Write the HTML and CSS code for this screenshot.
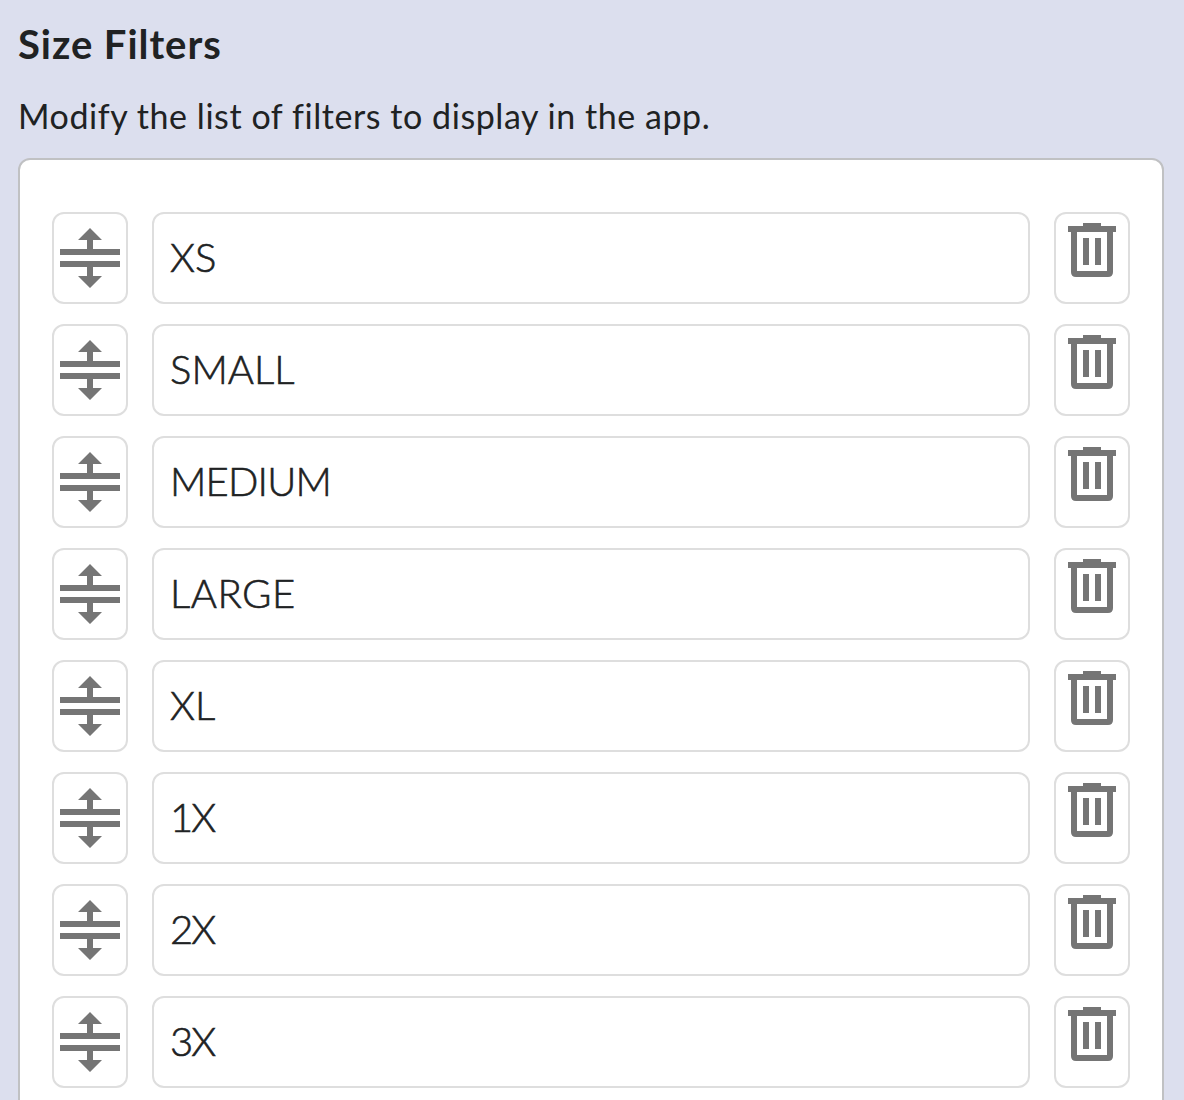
FILE: index.html
```html
<!DOCTYPE html>
<html lang="en">
<head>
  <meta charset="UTF-8">
  <meta name="viewport" content="width=device-width, initial-scale=1.0">
  <title>Size Filters</title>
  <link rel="stylesheet" href="styles.css">
</head>
<body>
  <svg class="sprite">
    <symbol id="drag" viewBox="0 0 60 60">
      <path d="M30 0L42 12H33V21H60V27H0V21H27V12H18ZM0 33H60V39H33V48H42L30 60L18 48H27V39H0Z"/>
    </symbol>
    <symbol id="trash" viewBox="0 0 48 54">
      <path fill-rule="evenodd" d="M15 0H33V3H48V9H45V49Q45 54 40 54H8Q3 54 3 49V9H0V3H15ZM9 9V48H39V9ZM15 15H21V42H15ZM27 15H33V42H27Z"/>
    </symbol>
  </svg>

  <div class="container">
    <h2 class="title">Size Filters</h2>
    <p class="description">Modify the list of filters to display in the app.</p>

    <div class="panel">
      <div class="row">
        <button class="btn drag" aria-label="Move"><svg><use href="#drag"/></svg></button>
        <input class="name" type="text" value="XS">
        <button class="btn trash" aria-label="Delete"><svg><use href="#trash"/></svg></button>
      </div>
      <div class="row">
        <button class="btn drag" aria-label="Move"><svg><use href="#drag"/></svg></button>
        <input class="name" type="text" value="SMALL">
        <button class="btn trash" aria-label="Delete"><svg><use href="#trash"/></svg></button>
      </div>
      <div class="row">
        <button class="btn drag" aria-label="Move"><svg><use href="#drag"/></svg></button>
        <input class="name tight" type="text" value="MEDIUM">
        <button class="btn trash" aria-label="Delete"><svg><use href="#trash"/></svg></button>
      </div>
      <div class="row">
        <button class="btn drag" aria-label="Move"><svg><use href="#drag"/></svg></button>
        <input class="name wide" type="text" value="LARGE">
        <button class="btn trash" aria-label="Delete"><svg><use href="#trash"/></svg></button>
      </div>
      <div class="row">
        <button class="btn drag" aria-label="Move"><svg><use href="#drag"/></svg></button>
        <input class="name" type="text" value="XL">
        <button class="btn trash" aria-label="Delete"><svg><use href="#trash"/></svg></button>
      </div>
      <div class="row">
        <button class="btn drag" aria-label="Move"><svg><use href="#drag"/></svg></button>
        <input class="name number" type="text" value="1X">
        <button class="btn trash" aria-label="Delete"><svg><use href="#trash"/></svg></button>
      </div>
      <div class="row">
        <button class="btn drag" aria-label="Move"><svg><use href="#drag"/></svg></button>
        <input class="name number" type="text" value="2X">
        <button class="btn trash" aria-label="Delete"><svg><use href="#trash"/></svg></button>
      </div>
      <div class="row">
        <button class="btn drag" aria-label="Move"><svg><use href="#drag"/></svg></button>
        <input class="name number" type="text" value="3X">
        <button class="btn trash" aria-label="Delete"><svg><use href="#trash"/></svg></button>
      </div>
    </div>
  </div>
</body>
</html>
```
FILE: styles.css
```css
* { box-sizing: border-box; }
body { margin: 0; height: 100vh; overflow: hidden; background: #dcdfee; color: #202223; font-family: Avenir, Lato, sans-serif; }
.sprite { display: none; }
.container { padding: 20px 20px 0 18px; }
.title { margin: 0; font-size: 40px; line-height: 48px; font-weight: bold; letter-spacing: 0.95px; }
.description { margin: 24px 0 18px; font-size: 34px; line-height: 48px; letter-spacing: 0.56px; }
.panel { display: flex; flex-direction: column; gap: 20px; padding: 52px 32px; background: #fff; border: 2px solid #c0c1c3; border-radius: 12px; }
.row { display: flex; gap: 24px; height: 92px; }
.btn, .name { border: 2px solid #dedede; border-radius: 12px; background: #fff; }
.btn { display: flex; flex: none; justify-content: center; width: 76px; padding: 0; cursor: pointer; }
.btn svg { fill: #757575; }
.drag { align-items: center; }
.drag svg { width: 60px; height: 60px; }
.trash { align-items: flex-start; padding-top: 9px; }
.trash svg { width: 48px; height: 54px; }
.name { flex: 1; min-width: 0; padding: 0 16px 2px; color: #202223; font-family: inherit; font-size: 40px; font-weight: 300; -webkit-text-stroke: 0.6px #202223; }
.tight { letter-spacing: -0.8px; }
.wide { letter-spacing: 0.5px; }
.number { letter-spacing: -2px; }
```
